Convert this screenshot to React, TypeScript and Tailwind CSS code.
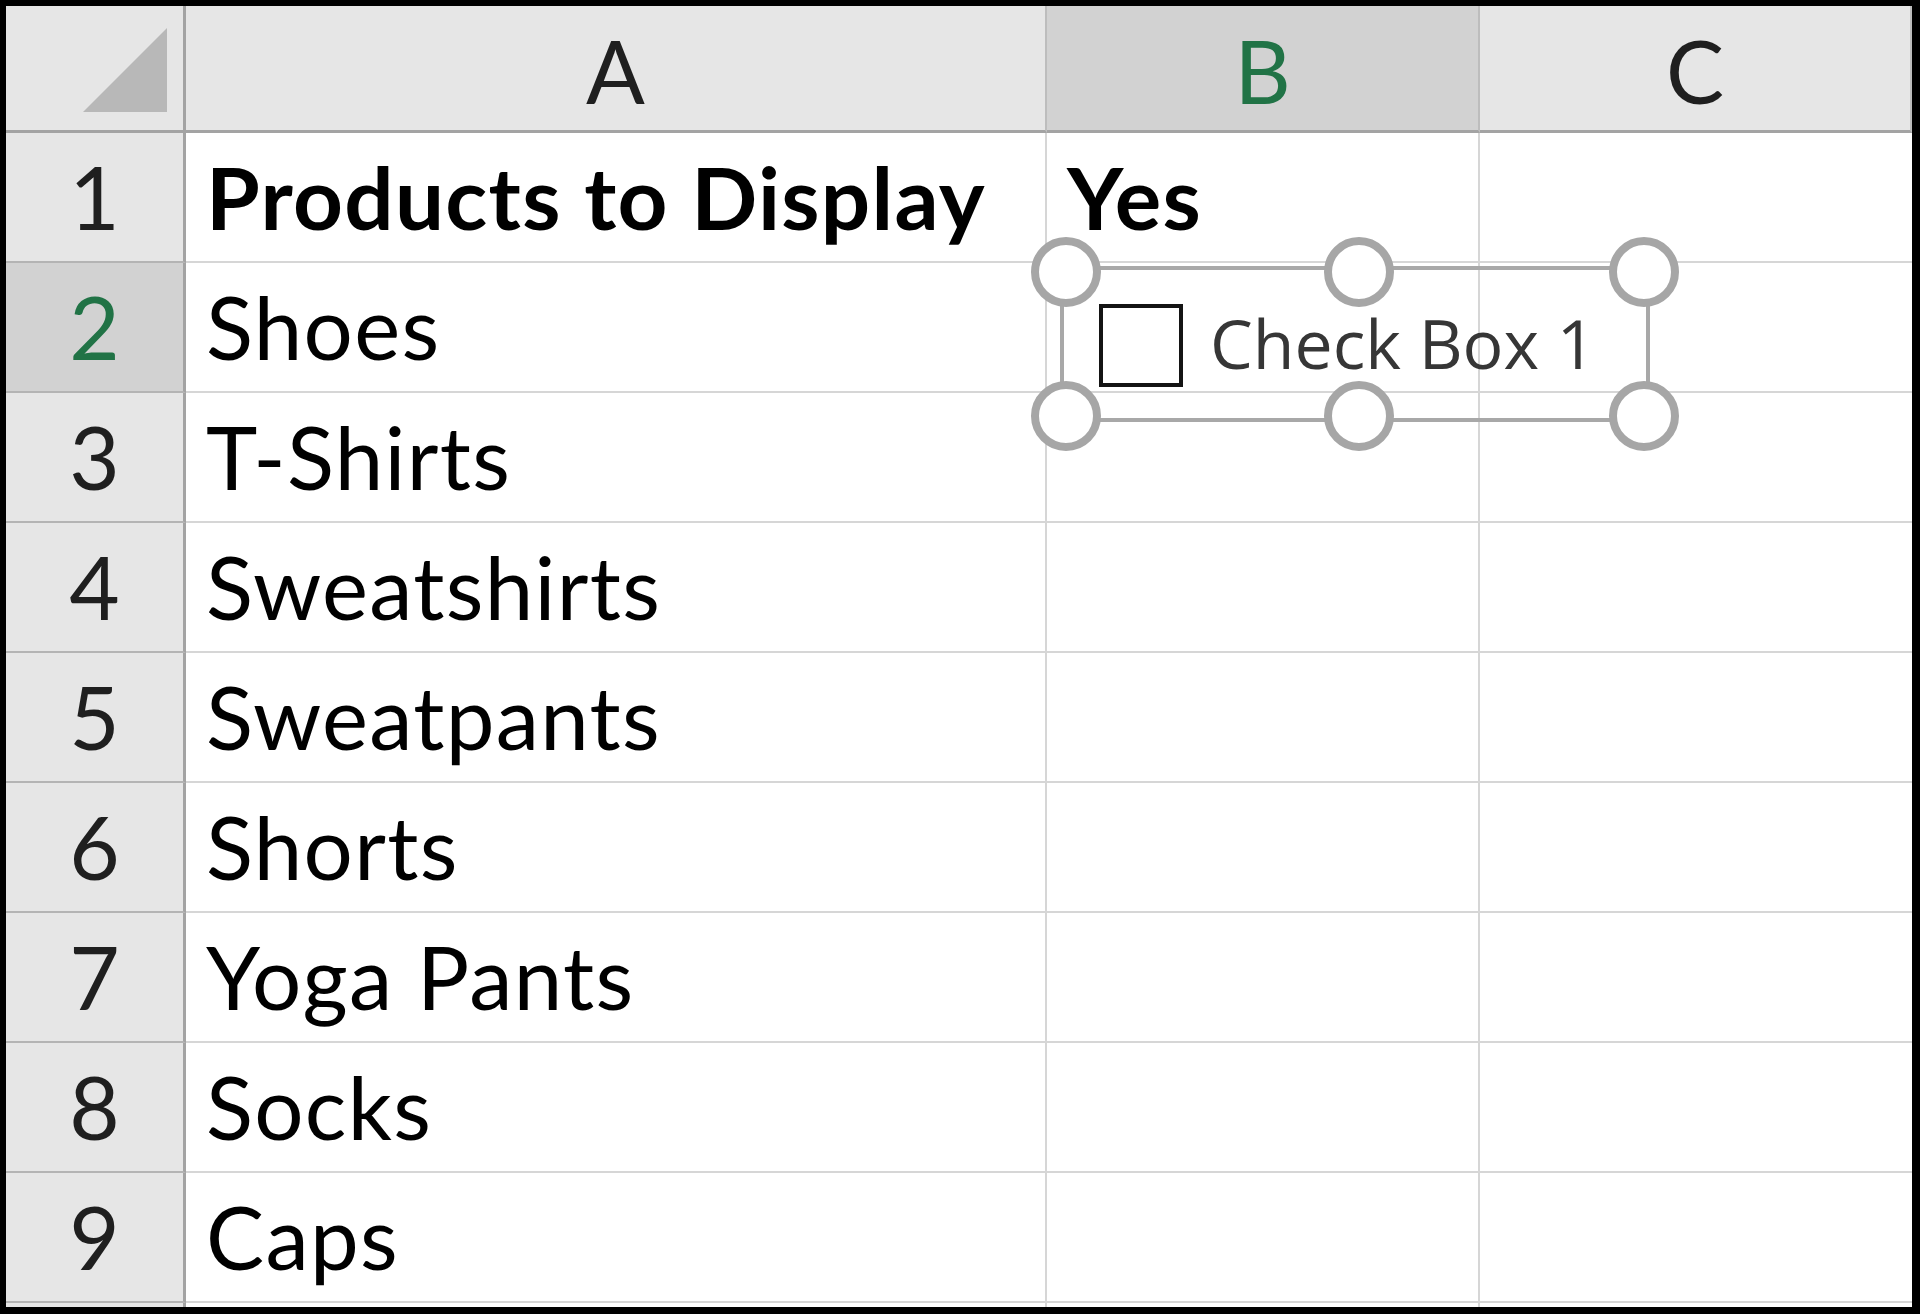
import React from "react";

const CALIBRI = { fontFamily: "Lato, 'Liberation Sans', sans-serif" };

const rows: { label: string; b?: string; bold?: boolean }[] = [
  { label: "Products to Display", b: "Yes", bold: true },
  { label: "Shoes" },
  { label: "T-Shirts" },
  { label: "Sweatshirts" },
  { label: "Sweatpants" },
  { label: "Shorts" },
  { label: "Yoga Pants" },
  { label: "Socks" },
  { label: "Caps" },
  { label: "" },
];

function ColHeader({ letter, selected }: { letter: string; selected?: boolean }) {
  return (
    <div
      className={`flex justify-center border-b-[3px] border-r-2 border-b-[#a3a3a3] border-r-[#bdbdbd] pt-[21px] text-[87px] leading-none ${
        selected ? "bg-[#d2d2d2] text-[#217346]" : "bg-[#e6e6e6] text-[#1f1f1f]"
      }`}
    >
      {letter}
    </div>
  );
}

function Handle({ className }: { className: string }) {
  return (
    <div
      className={`absolute h-[70px] w-[70px] rounded-full border-[8px] border-[#a6a6a6] bg-white ${className}`}
    />
  );
}

export default function App() {
  return (
    <div className="h-[1314px] w-[1920px] bg-black pb-[7px] pl-[6px] pr-[8px] pt-[6px]" style={CALIBRI}>
      <div className="relative h-full w-full overflow-hidden bg-white">
        <div className="grid grid-cols-[180px_861px_433px_432px] grid-rows-[127px_repeat(10,130px)]">
          {/* corner */}
          <div className="flex items-end justify-end border-b-[3px] border-r-[3px] border-b-[#a3a3a3] border-r-[#a3a3a3] bg-[#e6e6e6] pb-[18px] pr-[16px]">
            <svg width="84" height="84" viewBox="0 0 84 84">
              <polygon points="84,0 84,84 0,84" fill="#b8b8b8" />
            </svg>
          </div>
          <ColHeader letter="A" />
          <ColHeader letter="B" selected />
          <ColHeader letter="C" />

          {rows.map((r, i) => (
            <React.Fragment key={i}>
              <div
                className={`flex justify-center border-b-2 border-r-[3px] border-b-[#b4b4b4] border-r-[#a3a3a3] pt-[20px] text-[87px] leading-none ${
                  i === 1 ? "bg-[#d2d2d2] text-[#217346]" : "bg-[#e6e6e6] text-[#1f1f1f]"
                }`}
              >
                {r.label ? i + 1 : ""}
              </div>
              <div
                className={`border-b-2 border-r-2 border-[#d6d6d6] pl-[20px] pt-[20px] text-[87px] leading-none tracking-[1.3px] whitespace-nowrap text-black ${
                  r.bold ? "font-bold" : ""
                }`}
              >
                {r.label}
              </div>
              <div
                className={`border-b-2 border-r-2 border-[#d6d6d6] pl-[20px] pt-[20px] text-[87px] leading-none tracking-[1.3px] text-black ${
                  r.bold ? "font-bold" : ""
                }`}
              >
                {r.b ?? ""}
              </div>
              <div className="border-b-2 border-[#d6d6d6]" />
            </React.Fragment>
          ))}
        </div>

        {/* form control: Check Box 1, selected */}
        <div className="absolute left-[1054px] top-[260px] h-[156px] w-[590px] border-4 border-[#a8a8a8]">
          <div className="flex items-start pl-[35px] pt-[34px]">
            <div className="h-[83px] w-[84px] border-4 border-[#141414] bg-white" />
            <span
              className="ml-[27px] mt-[5px] text-[68px] leading-none text-[#363636] whitespace-nowrap"
              style={{ fontFamily: "'Open Sans', 'Noto Sans', sans-serif" }}
            >
              Check Box 1
            </span>
          </div>
          <Handle className="left-[-33px] top-[-33px]" />
          <Handle className="left-[260px] top-[-33px]" />
          <Handle className="right-[-33px] top-[-33px]" />
          <Handle className="bottom-[-33px] left-[-33px]" />
          <Handle className="bottom-[-33px] left-[260px]" />
          <Handle className="bottom-[-33px] right-[-33px]" />
        </div>
      </div>
    </div>
  );
}
